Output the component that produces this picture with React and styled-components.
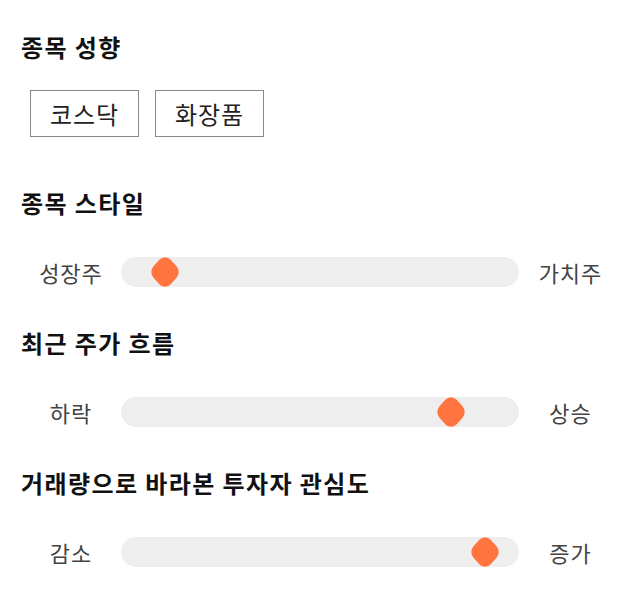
import React from "react";
import styled, { createGlobalStyle } from "styled-components";

const GlobalStyle = createGlobalStyle`
  body {
    margin: 0;
    background: #ffffff;
    font-family: "Noto Sans CJK KR", "Noto Sans", sans-serif;
  }
`;

const sliders = [
  { title: "종목 스타일", left: "성장주", right: "가치주", value: 0.081 },
  { title: "최근 주가 흐름", left: "하락", right: "상승", value: 0.854 },
  { title: "거래량으로 바라본 투자자 관심도", left: "감소", right: "증가", value: 0.946 },
];

const App = () => {
  return (
    <Page>
      <GlobalStyle />
      <Section>
        <Title>종목 성향</Title>
        <Tags>
          <Tag>코스닥</Tag>
          <Tag>화장품</Tag>
        </Tags>
      </Section>
      {sliders.map((s) => (
        <Section key={s.title}>
          <Title>{s.title}</Title>
          <SliderRow>
            <Label>{s.left}</Label>
            <Track>
              <Thumb style={{ left: `calc(${s.value} * (100% - 28px))` }} />
            </Track>
            <Label>{s.right}</Label>
          </SliderRow>
        </Section>
      ))}
    </Page>
  );
};

export default App;

const Page = styled.div`
  width: 640px;
  padding: 30px 20px 0 21px;
  box-sizing: border-box;
`;

const Section = styled.section`
  margin-bottom: 40px;
  &:first-child {
    margin-bottom: 49px;
  }
`;

const Title = styled.h2`
  margin: 0;
  font-size: 24px;
  font-weight: 700;
  line-height: 34px;
  color: #111;
  letter-spacing: 1.4px;
`;

const Tags = styled.div`
  display: flex;
  gap: 16px;
  margin-top: 26px;
  padding-left: 9px;
`;

const Tag = styled.div`
  width: 109px;
  height: 47px;
  box-sizing: border-box;
  border: 1px solid #888;
  display: flex;
  align-items: center;
  justify-content: center;
  font-size: 24px;
  letter-spacing: 1px;
  color: #222;
`;

const SliderRow = styled.div`
  display: grid;
  grid-template-columns: 100px 398px 1fr;
  align-items: center;
  margin-top: 36px;
  height: 30px;
`;

const Label = styled.div`
  text-align: center;
  font-size: 22px;
  letter-spacing: 1px;
  color: #444;
  &:last-child {
    padding-left: 2px;
  }
`;

const Track = styled.div`
  position: relative;
  height: 30px;
  border-radius: 15px;
  background: #eeeeee;
`;

const Thumb = styled.div`
  position: absolute;
  top: 0;
  width: 28px;
  height: 30px;
  &::before {
    content: "";
    position: absolute;
    left: 2px;
    top: 3px;
    width: 24px;
    height: 24px;
    border-radius: 8px;
    background: #ff743f;
    transform: scaleY(1.08) rotate(45deg);
  }
`;
